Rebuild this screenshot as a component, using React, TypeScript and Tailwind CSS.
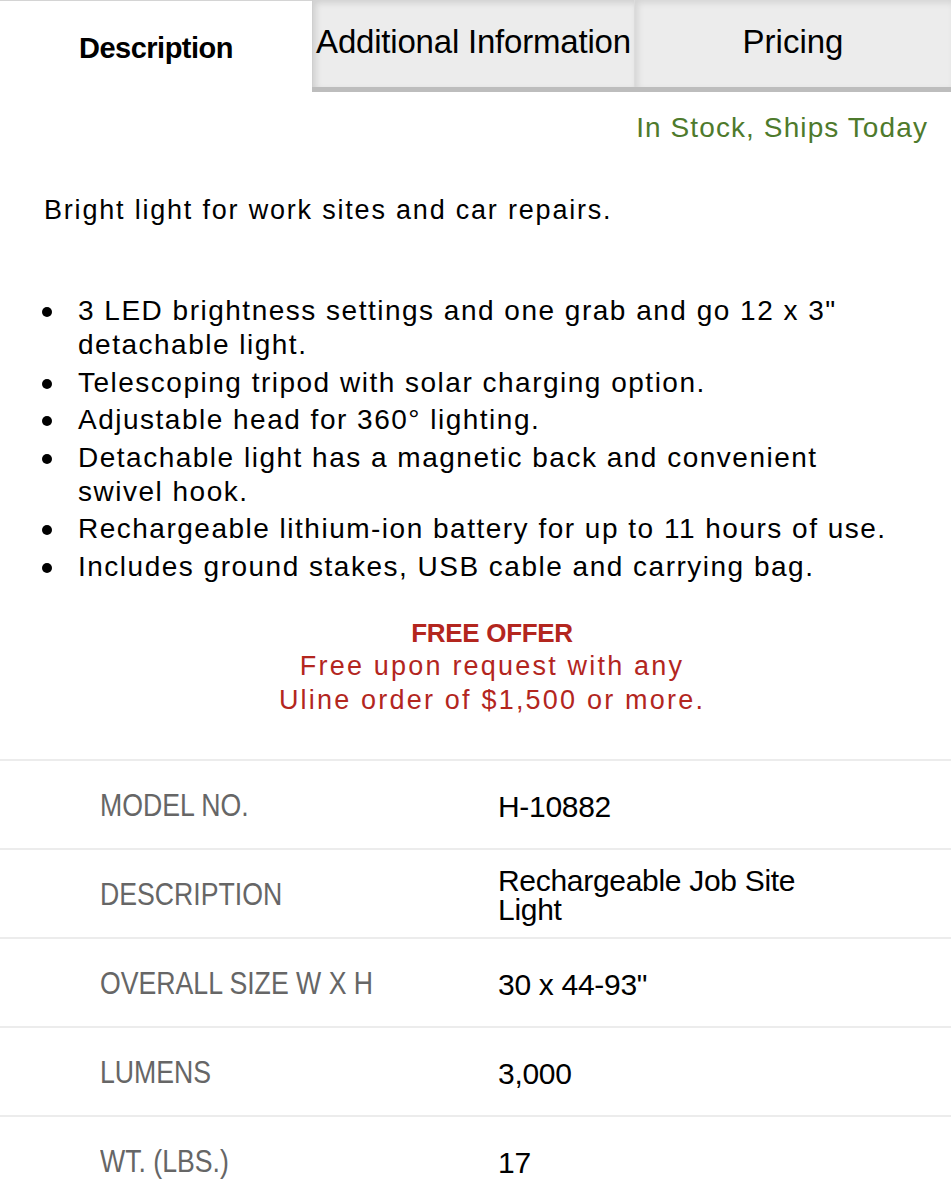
export default function App() {
  const bullets = [
    '3 LED brightness settings and one grab and go 12 x 3" detachable light.',
    "Telescoping tripod with solar charging option.",
    "Adjustable head for 360° lighting.",
    "Detachable light has a magnetic back and convenient swivel hook.",
    "Rechargeable lithium-ion battery for up to 11 hours of use.",
    "Includes ground stakes, USB cable and carrying bag.",
  ];

  const specs = [
    { label: "MODEL NO.", value: "H-10882" },
    { label: "DESCRIPTION", value: "Rechargeable Job Site Light" },
    { label: "OVERALL SIZE W X H", value: '30 x 44-93"' },
    { label: "LUMENS", value: "3,000" },
    { label: "WT. (LBS.)", value: "17" },
  ];

  return (
    <div className="w-[951px] min-h-[1200px] bg-white font-['Liberation_Sans',Arial,sans-serif] text-black overflow-hidden">
      {/* Tabs */}
      <div className="flex h-[92px]">
        <div className="w-[312px] border-t border-[#d4d4d4] bg-white flex items-center justify-center pt-1">
          <span className="text-[29px] font-bold tracking-[-0.5px]">Description</span>
        </div>
        <div className="w-[322px] flex flex-col">
          <div className="flex-1 bg-[#ececec] shadow-[inset_3px_3px_6px_rgba(0,0,0,0.12)] border-l border-[#cfcfcf] flex items-center justify-center pb-1">
            <span className="text-[33px] tracking-[-0.2px]">Additional Information</span>
          </div>
          <div className="h-[5px] bg-[#bdbdbd]" />
        </div>
        <div className="flex-1 flex flex-col">
          <div className="flex-1 bg-[#ececec] shadow-[inset_3px_3px_6px_rgba(0,0,0,0.1)] border-l border-[#dcdcdc] flex items-center justify-center pb-1">
            <span className="text-[33px]">Pricing</span>
          </div>
          <div className="h-[5px] bg-[#bdbdbd]" />
        </div>
      </div>

      {/* Stock */}
      <div className="flex justify-end pr-[23px] pt-[15px]">
        <span className="text-[28px] tracking-[1.1px] text-[#4e7a2c]">In Stock, Ships Today</span>
      </div>

      <p className="pl-[44px] mt-[44px] text-[27px] leading-[34px] tracking-[1.8px]">
        Bright light for work sites and car repairs.
      </p>

      <ul className="mt-[67px] pl-[78px] pr-[58px] flex flex-col gap-[3.5px]">
        {bullets.map((b) => (
          <li key={b} className="relative text-[28px] leading-[34px] tracking-[1.5px]">
            <span className="absolute left-[-36px] top-[13px] w-[10px] h-[10px] rounded-full bg-black" />
            {b}
          </li>
        ))}
      </ul>

      {/* Free offer */}
      <div className="mt-[33px] text-center text-[#b3261e] text-[27px] leading-[33.5px] tracking-[2.2px] pl-[33px]">
        <div className="font-bold text-[26px] tracking-[-0.3px]">FREE OFFER</div>
        <div>Free upon request with any</div>
        <div>Uline order of $1,500 or more.</div>
      </div>

      {/* Specs table */}
      <div className="mt-[42px] border-t-2 border-[#ececec]">
        {specs.map((s) => (
          <div key={s.label} className="h-[89px] border-b-2 border-[#ececec] flex items-center pt-[3px]">
            <div className="w-[498px] pl-[100px] text-[31px] text-[#666666] whitespace-nowrap">
              <span className="inline-block origin-left scale-x-[0.86]">{s.label}</span>
            </div>
            <div className="w-[350px] text-[30px] leading-[29px] tracking-[-0.3px] text-black">{s.value}</div>
          </div>
        ))}
      </div>
    </div>
  );
}
